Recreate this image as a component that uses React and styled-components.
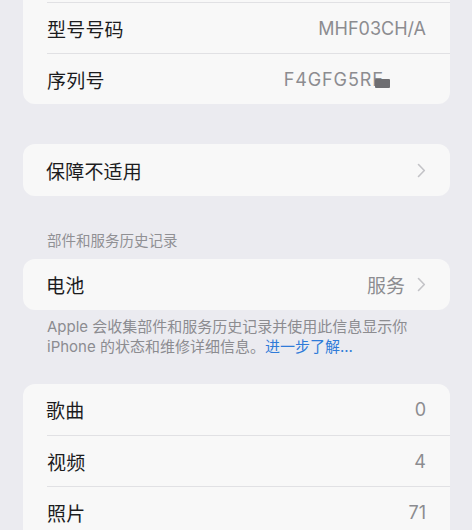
import React from 'react';
import styled, { createGlobalStyle } from 'styled-components';

const GlobalStyle = createGlobalStyle`
  html, body {
    margin: 0;
    padding: 0;
    background: #ebebf0;
  }
  body {
    font-family: Inter, "Noto Sans CJK SC", "Noto Sans", sans-serif;
    -webkit-font-smoothing: antialiased;
  }
`;

function Chevron() {
  return (
    <ChevronSvg width="9" height="15" viewBox="0 0 9 15" fill="none">
      <path d="M1.5 1.5L7.3 7.5L1.5 13.5" stroke="#c3c3c7" strokeWidth="1.6" strokeLinecap="round" strokeLinejoin="round" />
    </ChevronSvg>
  );
}

function App() {
  return (
    <Page>
      <GlobalStyle />
      <Card>
        <Row>
          <Label>容量</Label>
          <Value>64 GB</Value>
        </Row>
        <Row>
          <Label>型号号码</Label>
          <Value>MHF03CH/A</Value>
        </Row>
        <Row>
          <Label>序列号</Label>
          <Serial>
            F4GFG5RE<Redact />
          </Serial>
        </Row>
      </Card>

      <Card $gap={40}>
        <Row $tall>
          <Label>保障不适用</Label>
          <Chevron />
        </Row>
      </Card>

      <SectionHeader>部件和服务历史记录</SectionHeader>
      <Card>
        <Row>
          <Label>电池</Label>
          <Trail>
            <Value $cjk>服务</Value>
            <Chevron />
          </Trail>
        </Row>
      </Card>
      <Footer>
        Apple 会收集部件和服务历史记录并使用此信息显示你 iPhone 的状态和维修详细信息。<LinkText>进一步了解...</LinkText>
      </Footer>

      <Card $gap={27}>
        <Row>
          <Label>歌曲</Label>
          <Value>0</Value>
        </Row>
        <Row>
          <Label>视频</Label>
          <Value>4</Value>
        </Row>
        <Row>
          <Label>照片</Label>
          <Value>71</Value>
        </Row>
        <Row>
          <Label>应用程序</Label>
          <Value>42</Value>
        </Row>
      </Card>
    </Page>
  );
}

export default App;

const Page = styled.div`
  margin-top: -49px;
  padding: 0 22px 40px 23px;
  display: flex;
  flex-direction: column;
  height: 579px;
  overflow: hidden;
  box-sizing: border-box;
`;

const Card = styled.div`
  background: #f8f8f8;
  border-radius: 12px;
  overflow: hidden;
  margin-top: ${(p) => (p.$gap ? `${p.$gap}px` : '0')};
  flex-shrink: 0;
`;

const Row = styled.div`
  box-sizing: border-box;
  height: ${(p) => (p.$tall ? '52px' : '51px')};
  display: flex;
  align-items: center;
  justify-content: space-between;
  padding: 0 24px 0 23px;
  position: relative;

  & + & {
    border-top: 1px solid #e1e1e4;
    margin-left: 24px;
    padding-left: 0;
  }
`;

const Label = styled.span`
  font-size: 19px;
  color: #1c1c1e;
  letter-spacing: 0.2px;
`;

const Value = styled.span`
  font-size: ${(p) => (p.$cjk ? '19px' : '18px')};
  color: #8c8c90;
`;

const Serial = styled.span`
  font-size: 18px;
  letter-spacing: 0.9px;
  color: #8c8c90;
  margin-right: 42px;
  position: relative;
  display: inline-flex;
  align-items: center;
`;

const Redact = styled.span`
  position: absolute;
  right: -6px;
  top: 10px;
  width: 15px;
  height: 9px;
  background: #6e6e72;
  border-radius: 1px;
`;

const Trail = styled.span`
  display: flex;
  align-items: center;
  gap: 12px;
`;

const ChevronSvg = styled.svg`
  display: block;
  margin-right: 0;
`;

const SectionHeader = styled.div`
  margin: 36px 0 9px 24px;
  font-size: 14.5px;
  line-height: 18px;
  color: #909094;
`;

const Footer = styled.div`
  padding: 7px 24px 0 24px;
  font-size: 15px;
  line-height: 20px;
  color: #8c8c90;
`;

const LinkText = styled.span`
  color: #2f7bd9;
`;
